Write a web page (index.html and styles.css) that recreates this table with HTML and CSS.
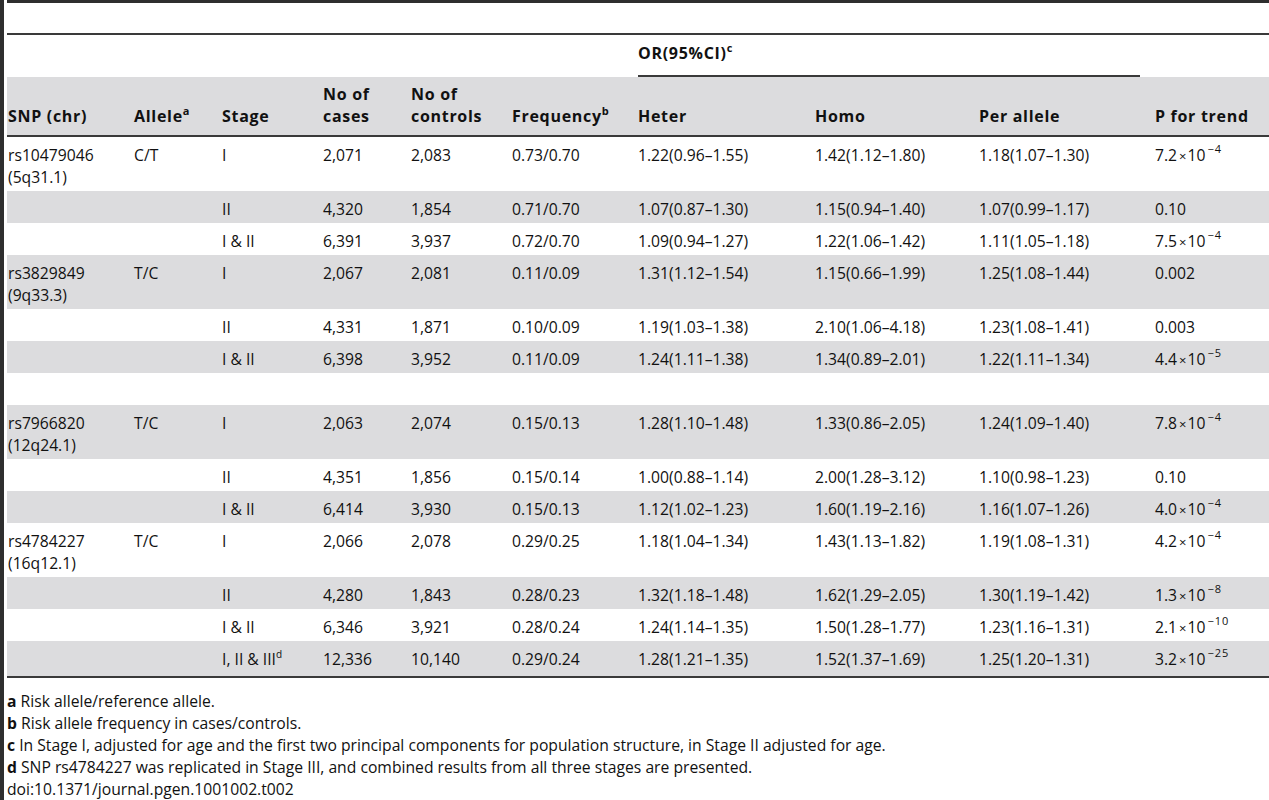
FILE: index.html
```html
<!DOCTYPE html>
<html lang="en">
<head>
<meta charset="utf-8">
<title>Table 2</title>
<link rel="stylesheet" href="styles.css">
</head>
<body>
<div class="page">
  <div class="frame">
    <div class="caption-space"></div>
    <table class="data">
      <colgroup>
        <col class="c1"><col class="c2"><col class="c3"><col class="c4"><col class="c5">
        <col class="c6"><col class="c7"><col class="c8"><col class="c9"><col class="c10">
      </colgroup>
      <thead>
        <tr class="group-row">
          <th colspan="6"></th>
          <th colspan="3"><div class="group-label">OR(95%CI)<sup>c</sup></div></th>
          <th></th>
        </tr>
        <tr class="head-row">
          <th class="first">SNP (chr)</th>
          <th>Allele<sup>a</sup></th>
          <th>Stage</th>
          <th>No of<br>cases</th>
          <th>No of<br>controls</th>
          <th>Frequency<sup>b</sup></th>
          <th>Heter</th>
          <th>Homo</th>
          <th>Per allele</th>
          <th>P for trend</th>
        </tr>
      </thead>
      <tbody>
        <tr>
          <td class="first">rs10479046<br>(5q31.1)</td><td>C/T</td><td>I</td><td>2,071</td><td>2,083</td><td>0.73/0.70</td>
          <td>1.22(0.96–1.55)</td><td>1.42(1.12–1.80)</td><td>1.18(1.07–1.30)</td><td>7.2<span class="times">×</span>10<sup class="exp">−4</sup></td>
        </tr>
        <tr class="alt">
          <td class="first"></td><td></td><td>II</td><td>4,320</td><td>1,854</td><td>0.71/0.70</td>
          <td>1.07(0.87–1.30)</td><td>1.15(0.94–1.40)</td><td>1.07(0.99–1.17)</td><td>0.10</td>
        </tr>
        <tr>
          <td class="first"></td><td></td><td>I &amp; II</td><td>6,391</td><td>3,937</td><td>0.72/0.70</td>
          <td>1.09(0.94–1.27)</td><td>1.22(1.06–1.42)</td><td>1.11(1.05–1.18)</td><td>7.5<span class="times">×</span>10<sup class="exp">−4</sup></td>
        </tr>
        <tr class="alt">
          <td class="first">rs3829849<br>(9q33.3)</td><td>T/C</td><td>I</td><td>2,067</td><td>2,081</td><td>0.11/0.09</td>
          <td>1.31(1.12–1.54)</td><td>1.15(0.66–1.99)</td><td>1.25(1.08–1.44)</td><td>0.002</td>
        </tr>
        <tr>
          <td class="first"></td><td></td><td>II</td><td>4,331</td><td>1,871</td><td>0.10/0.09</td>
          <td>1.19(1.03–1.38)</td><td>2.10(1.06–4.18)</td><td>1.23(1.08–1.41)</td><td>0.003</td>
        </tr>
        <tr class="alt">
          <td class="first"></td><td></td><td>I &amp; II</td><td>6,398</td><td>3,952</td><td>0.11/0.09</td>
          <td>1.24(1.11–1.38)</td><td>1.34(0.89–2.01)</td><td>1.22(1.11–1.34)</td><td>4.4<span class="times">×</span>10<sup class="exp">−5</sup></td>
        </tr>
        <tr class="blank">
          <td class="first">&nbsp;</td><td></td><td></td><td></td><td></td><td></td><td></td><td></td><td></td><td></td>
        </tr>
        <tr class="alt">
          <td class="first">rs7966820<br>(12q24.1)</td><td>T/C</td><td>I</td><td>2,063</td><td>2,074</td><td>0.15/0.13</td>
          <td>1.28(1.10–1.48)</td><td>1.33(0.86–2.05)</td><td>1.24(1.09–1.40)</td><td>7.8<span class="times">×</span>10<sup class="exp">−4</sup></td>
        </tr>
        <tr>
          <td class="first"></td><td></td><td>II</td><td>4,351</td><td>1,856</td><td>0.15/0.14</td>
          <td>1.00(0.88–1.14)</td><td>2.00(1.28–3.12)</td><td>1.10(0.98–1.23)</td><td>0.10</td>
        </tr>
        <tr class="alt">
          <td class="first"></td><td></td><td>I &amp; II</td><td>6,414</td><td>3,930</td><td>0.15/0.13</td>
          <td>1.12(1.02–1.23)</td><td>1.60(1.19–2.16)</td><td>1.16(1.07–1.26)</td><td>4.0<span class="times">×</span>10<sup class="exp">−4</sup></td>
        </tr>
        <tr>
          <td class="first">rs4784227<br>(16q12.1)</td><td>T/C</td><td>I</td><td>2,066</td><td>2,078</td><td>0.29/0.25</td>
          <td>1.18(1.04–1.34)</td><td>1.43(1.13–1.82)</td><td>1.19(1.08–1.31)</td><td>4.2<span class="times">×</span>10<sup class="exp">−4</sup></td>
        </tr>
        <tr class="alt">
          <td class="first"></td><td></td><td>II</td><td>4,280</td><td>1,843</td><td>0.28/0.23</td>
          <td>1.32(1.18–1.48)</td><td>1.62(1.29–2.05)</td><td>1.30(1.19–1.42)</td><td>1.3<span class="times">×</span>10<sup class="exp">−8</sup></td>
        </tr>
        <tr>
          <td class="first"></td><td></td><td>I &amp; II</td><td>6,346</td><td>3,921</td><td>0.28/0.24</td>
          <td>1.24(1.14–1.35)</td><td>1.50(1.28–1.77)</td><td>1.23(1.16–1.31)</td><td>2.1<span class="times">×</span>10<sup class="exp">−10</sup></td>
        </tr>
        <tr class="alt last">
          <td class="first"></td><td></td><td>I, II &amp; III<sup>d</sup></td><td>12,336</td><td>10,140</td><td>0.29/0.24</td>
          <td>1.28(1.21–1.35)</td><td>1.52(1.37–1.69)</td><td>1.25(1.20–1.31)</td><td>3.2<span class="times">×</span>10<sup class="exp">−25</sup></td>
        </tr>
      </tbody>
    </table>
    <div class="notes">
      <p><b>a</b> Risk allele/reference allele.</p>
      <p><b>b</b> Risk allele frequency in cases/controls.</p>
      <p><b>c</b> In Stage I, adjusted for age and the first two principal components for population structure, in Stage II adjusted for age.</p>
      <p><b>d</b> SNP rs4784227 was replicated in Stage III, and combined results from all three stages are presented.</p>
      <p>doi:10.1371/journal.pgen.1001002.t002</p>
    </div>
  </div>
</div>
</body>
</html>
```

FILE: styles.css
```css
html, body {
  margin: 0;
  padding: 0;
  background: #ffffff;
}

body {
  font-family: "Open Sans", "Noto Sans", "Liberation Sans", sans-serif;
  font-size: 15.7px;
  color: #111111;
}

.page {
  border-left: 4px solid #2e2e2e;
  padding-left: 3px;
  height: 800px;
  overflow: hidden;
  box-sizing: border-box;
}

.frame {
  border-top: 3px solid #2e2e2e;
}

.caption-space {
  height: 30px;
  border-bottom: 2px solid #3a3a3a;
}

.data {
  width: 1262px;
  border-collapse: collapse;
  table-layout: fixed;
}

.c1 { width: 127px; }
.c2 { width: 88px; }
.c3 { width: 101px; }
.c4 { width: 88px; }
.c5 { width: 101px; }
.c6 { width: 126px; }
.c7 { width: 177px; }
.c8 { width: 164px; }
.c9 { width: 176px; }
.c10 { width: 114px; }

th, td {
  padding: 0;
  text-align: left;
  line-height: 22px;
  white-space: nowrap;
}

th {
  font-weight: 700;
  font-size: 16px;
  letter-spacing: 0.7px;
}

.group-row th {
  height: 42px;
  vertical-align: bottom;
}

.group-label {
  margin-right: 15px;
  padding-bottom: 11px;
  border-bottom: 2px solid #3a3a3a;
}

.head-row th {
  background: #dcdcde;
  vertical-align: bottom;
  padding-top: 6px;
  padding-bottom: 8px;
  border-bottom: 2px solid #3a3a3a;
}

.first {
  padding-left: 1px;
}

td {
  vertical-align: top;
  padding-top: 7px;
  padding-bottom: 3px;
}

tr.alt td {
  background: #dcdcde;
}

tr.last td {
  padding-bottom: 6px;
  border-bottom: 2px solid #3a3a3a;
}

.times {
  font-size: 13px;
  line-height: 0;
  margin: 0 1px 0 2px;
}

sup {
  font-size: 10px;
  line-height: 0;
  vertical-align: 7px;
}

th sup {
  font-size: 11px;
  letter-spacing: 0;
}

sup.exp {
  font-size: 11px;
  vertical-align: 8px;
  margin-left: 2px;
  letter-spacing: 1px;
}

.notes {
  padding-top: 12px;
}

.notes p {
  margin: 0;
  line-height: 22px;
}

.notes b {
  font-weight: 700;
}
```
